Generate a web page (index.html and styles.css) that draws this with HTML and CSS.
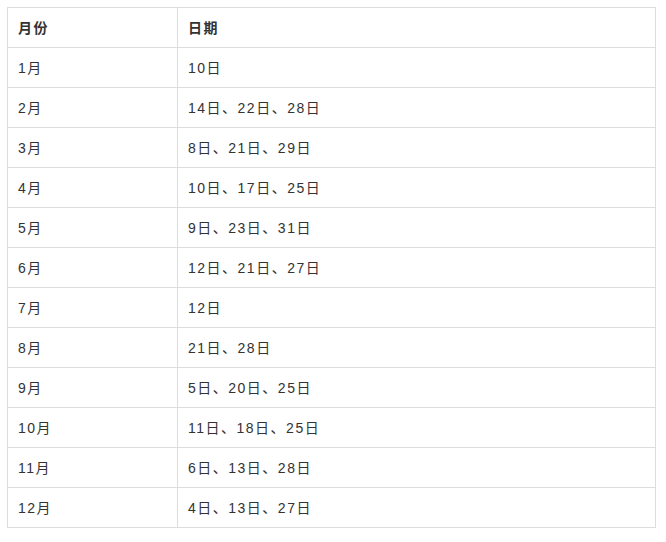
FILE: index.html
```html
<!DOCTYPE html>
<html lang="zh-CN">
<head>
<meta charset="utf-8">
<link rel="stylesheet" href="styles.css">
</head>
<body>
<table class="dates">
<thead>
<tr><th class="col-month">月份</th><th>日期</th></tr>
</thead>
<tbody>
<tr><td>1月</td><td>10日</td></tr>
<tr><td>2月</td><td>14日、22日、28日</td></tr>
<tr><td>3月</td><td>8日、21日、29日</td></tr>
<tr><td>4月</td><td>10日、17日、25日</td></tr>
<tr><td>5月</td><td>9日、23日、31日</td></tr>
<tr><td>6月</td><td>12日、21日、27日</td></tr>
<tr><td>7月</td><td>12日</td></tr>
<tr><td>8月</td><td>21日、28日</td></tr>
<tr><td>9月</td><td>5日、20日、25日</td></tr>
<tr><td>10月</td><td>11日、18日、25日</td></tr>
<tr><td>11月</td><td>6日、13日、28日</td></tr>
<tr><td>12月</td><td>4日、13日、27日</td></tr>
</tbody>
</table>
</body>
</html>
```
FILE: styles.css
```css
html, body {
  margin: 0;
  padding: 0;
  background: #fff;
}
body {
  padding: 7px;
  font-family: "Liberation Sans", "Noto Sans CJK SC", sans-serif;
  font-size: 14px;
  color: #333;
}
.dates {
  border-collapse: collapse;
  width: 649px;
  table-layout: fixed;
}
.dates th,
.dates td {
  border: 1px solid #ddd;
  height: 40px;
  padding: 0 10px;
  text-align: left;
  vertical-align: middle;
  letter-spacing: 1.5px;
  line-height: 20px;
  box-sizing: border-box;
}
.dates th {
  font-weight: bold;
}
.col-month {
  width: 170px;
}
```
